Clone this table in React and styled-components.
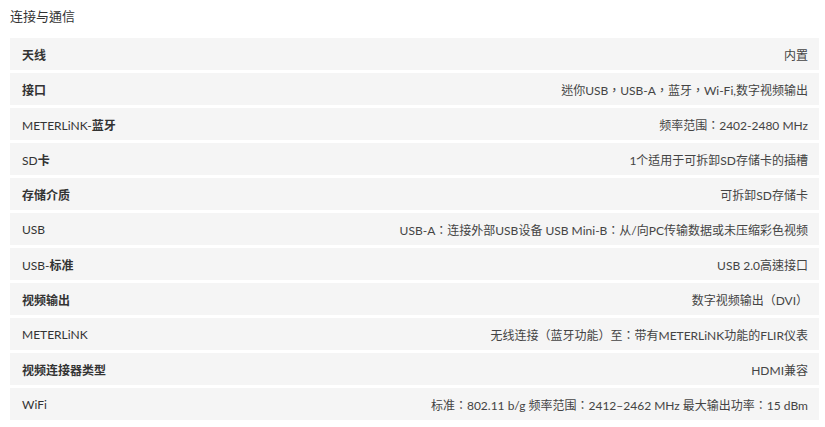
import React from 'react'
import styled, { createGlobalStyle } from 'styled-components'

const specs = [
  { label: '天线', value: '内置' },
  { label: '接口', value: '迷你USB，USB-A，蓝牙，Wi-Fi,数字视频输出' },
  { label: 'METERLiNK-蓝牙', value: '频率范围：2402-2480 MHz' },
  { label: 'SD卡', value: '1个适用于可拆卸SD存储卡的插槽' },
  { label: '存储介质', value: '可拆卸SD存储卡' },
  {
    label: 'USB',
    value: 'USB-A：连接外部USB设备 USB Mini-B：从/向PC传输数据或未压缩彩色视频',
  },
  { label: 'USB-标准', value: 'USB 2.0高速接口' },
  { label: '视频输出', value: '数字视频输出（DVI）' },
  { label: 'METERLiNK', value: '无线连接（蓝牙功能）至：带有METERLiNK功能的FLIR仪表' },
  { label: '视频连接器类型', value: 'HDMI兼容' },
  { label: 'WiFi', value: '标准：802.11 b/g 频率范围：2412–2462 MHz 最大输出功率：15 dBm' },
]

// latin parts of a label stay regular, the chinese parts are bold
const splitLabel = text => text.split(/([\u4e00-\u9fff]+)/).filter(Boolean)

const GlobalStyle = createGlobalStyle`
  body {
    margin: 0;
    background: #ffffff;
    font-family: 'Lato', 'Noto Sans CJK TC', sans-serif;
  }
`

const Section = styled.section`
  padding: 8px 6px 0 10px;
`

const Title = styled.h3`
  margin: 0 0 13px;
  font-size: 13px;
  line-height: 17px;
  font-weight: 400;
  color: #333333;
`

const List = styled.div`
  display: flex;
  flex-direction: column;
  gap: 3px;
`

const Row = styled.div`
  display: flex;
  align-items: center;
  justify-content: space-between;
  height: 32px;
  padding: 0 11px 0 12px;
  background: #f5f5f5;
  font-size: 12px;
  color: #333333;
`

const Label = styled.span`
  font-weight: 400;
`

const Han = styled.b`
  font-weight: 700;
`

const Value = styled.span`
  text-align: right;
  color: #444444;
`

const App = () => {
  return (
    <>
      <GlobalStyle />
      <Section>
        <Title>连接与通信</Title>
        <List>
          {specs.map(item => (
            <Row key={item.label}>
              <Label>
                {splitLabel(item.label).map((part, i) =>
                  /[\u4e00-\u9fff]/.test(part) ? <Han key={i}>{part}</Han> : part
                )}
              </Label>
              <Value>{item.value}</Value>
            </Row>
          ))}
        </List>
      </Section>
    </>
  )
}

export default App
